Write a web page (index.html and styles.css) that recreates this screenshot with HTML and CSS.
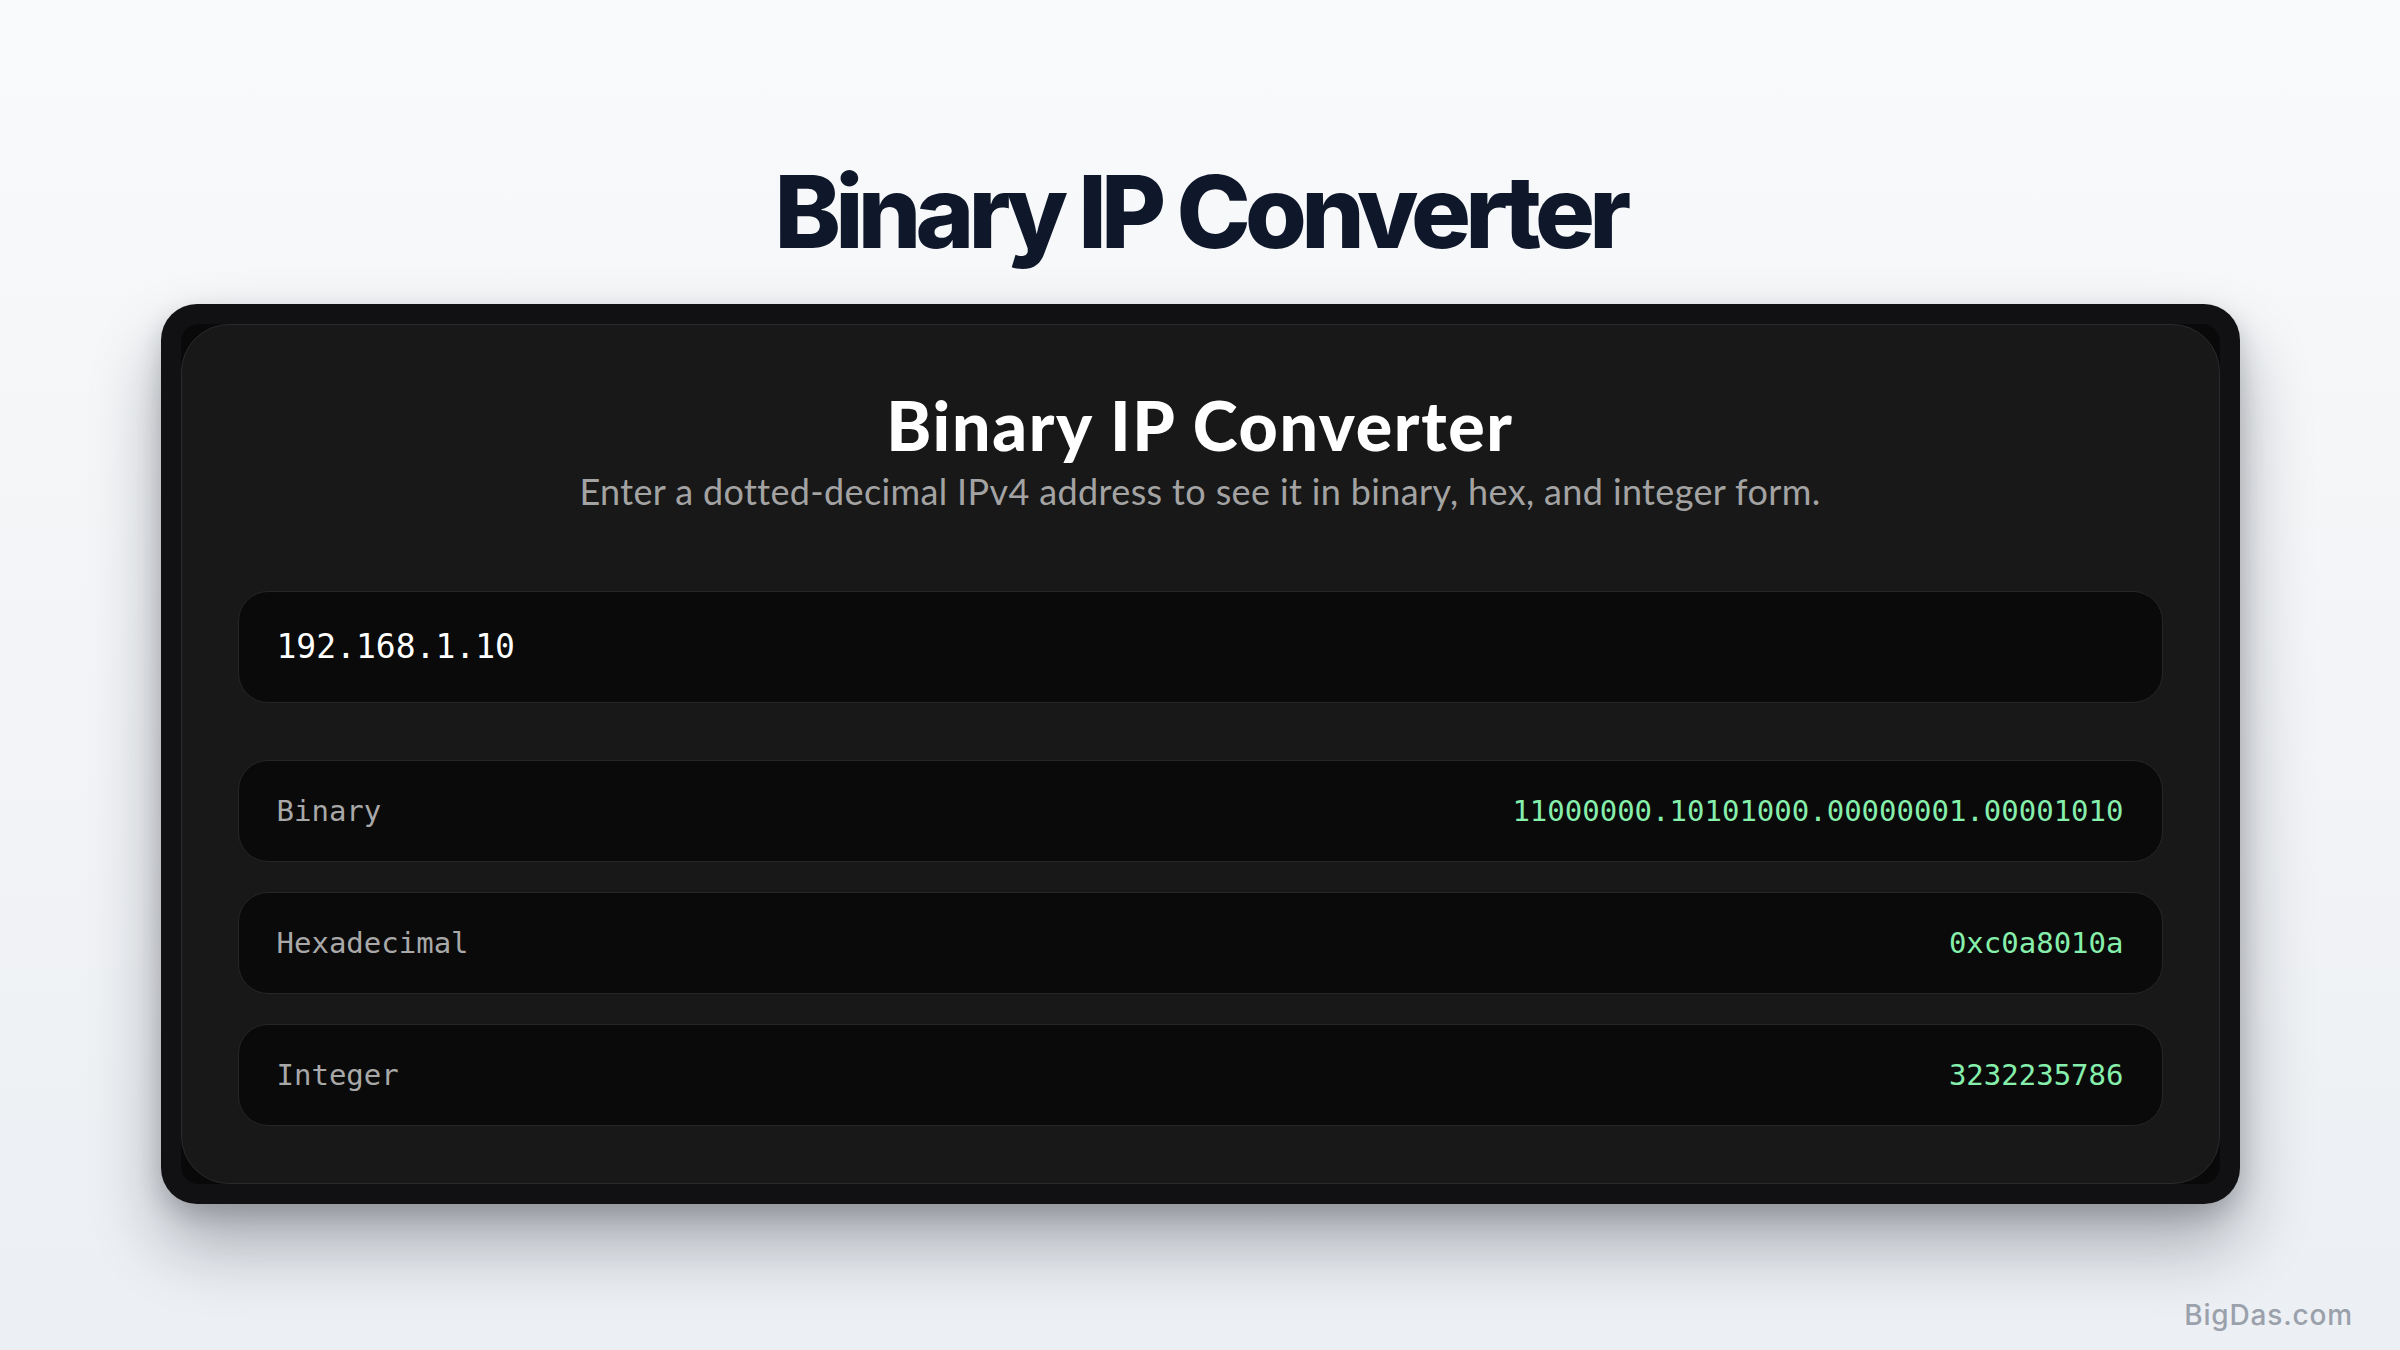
FILE: index.html
```html
<!DOCTYPE html>
<html lang="en">
<head>
<meta charset="utf-8">
<title>Binary IP Converter</title>
<link rel="stylesheet" href="styles.css">
</head>
<body>
<main class="page">
  <h1 class="page-title">Binary IP Converter</h1>
  <section class="frame">
    <div class="frame-inner">
      <div class="panel">
        <h2 class="panel-title">Binary IP Converter</h2>
        <p class="panel-sub">Enter a dotted-decimal IPv4 address to see it in binary, hex, and integer form.</p>
        <div class="ip-input">192.168.1.10</div>
        <div class="results">
          <div class="row"><span class="label">Binary</span><span class="value">11000000.10101000.00000001.00001010</span></div>
          <div class="row"><span class="label">Hexadecimal</span><span class="value">0xc0a8010a</span></div>
          <div class="row"><span class="label">Integer</span><span class="value">3232235786</span></div>
        </div>
      </div>
    </div>
  </section>
  <div class="brand">BigDas.com</div>
</main>
</body>
</html>
```
FILE: styles.css
```css
* { box-sizing: border-box; }
html, body { margin: 0; padding: 0; }
body {
  width: 2400px;
  height: 1350px;
  overflow: hidden;
  background: linear-gradient(180deg, #f9fafb 0%, #f1f3f6 60%, #eceff3 100%);
  font-family: Inter, "Noto Sans", sans-serif;
}
.page {
  position: relative;
  height: 1350px;
  display: flex;
  flex-direction: column;
  align-items: center;
  padding-top: 162px;
}
.page-title {
  margin: 0;
  font-family: Inter, sans-serif;
  font-weight: 800;
  font-size: 100px;
  line-height: 1;
  letter-spacing: -0.058em;
  color: #0f172a;
}
.frame {
  margin-top: 42px;
  width: 2079px;
  padding: 20px;
  background: #111113;
  border-radius: 36px;
  box-shadow: 0 40px 70px rgba(15, 20, 30, 0.32), 0 10px 24px rgba(15, 20, 30, 0.18);
}
.frame-inner {
  background: #090909;
  border-radius: 18px;
}
.panel {
  background: #181818;
  border: 1px solid #2a2a2a;
  border-radius: 48px;
  padding: 59px 56px 57px;
  display: flex;
  flex-direction: column;
}
.panel-title {
  margin: 0;
  text-align: center;
  font-family: Lato, sans-serif;
  font-weight: 900;
  font-size: 68px;
  line-height: 1.2;
  letter-spacing: 0.025em;
  color: #ffffff;
}
.panel-sub {
  margin: 0;
  text-align: center;
  font-family: Lato, sans-serif;
  font-weight: 400;
  font-size: 36px;
  line-height: 1.4;
  letter-spacing: 0.01em;
  color: #a3a3a3;
}
.ip-input {
  margin-top: 75px;
  height: 112px;
  background: #0a0a0a;
  border: 1px solid #262626;
  border-radius: 30px;
  padding: 0 38px;
  display: flex;
  align-items: center;
  font-family: "DejaVu Sans Mono", monospace;
  font-size: 33px;
  color: #ffffff;
}
.results {
  margin-top: 57px;
  display: flex;
  flex-direction: column;
  gap: 30px;
}
.row {
  height: 102px;
  background: #0a0a0a;
  border: 1px solid #262626;
  border-radius: 30px;
  padding: 0 38px;
  display: flex;
  align-items: center;
  justify-content: space-between;
  font-family: "DejaVu Sans Mono", monospace;
  font-size: 29px;
}
.label { color: #a8a8a8; }
.value { color: #86efac; }
.brand {
  position: absolute;
  right: 47px;
  bottom: 18px;
  font-family: Inter, sans-serif;
  font-weight: 500;
  font-size: 28px;
  letter-spacing: 0.03em;
  color: #9aa1ab;
}
```
